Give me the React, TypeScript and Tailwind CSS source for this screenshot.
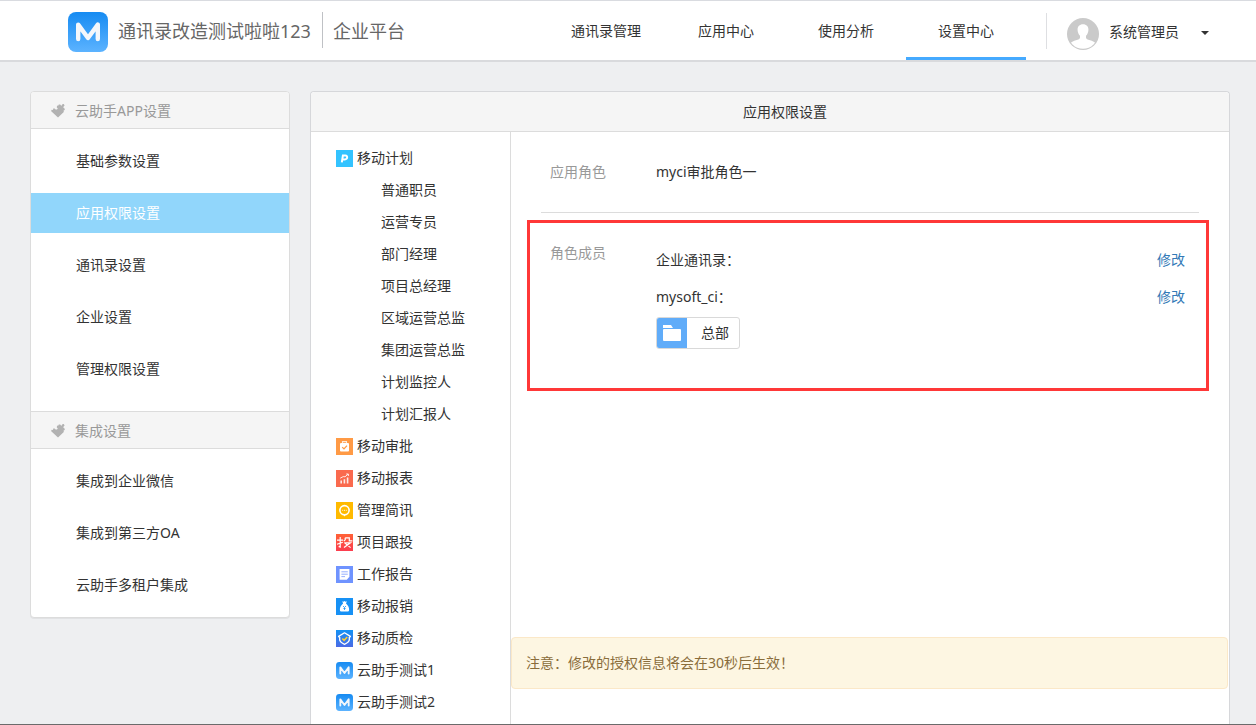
import React from "react";

const navItems = ["通讯录管理", "应用中心", "使用分析", "设置中心"];

const menuGroups = [
  {
    title: "云助手APP设置",
    items: ["基础参数设置", "应用权限设置", "通讯录设置", "企业设置", "管理权限设置"],
  },
  {
    title: "集成设置",
    items: ["集成到企业微信", "集成到第三方OA", "云助手多租户集成"],
  },
];

type AppNode = { name: string; icon: React.ReactNode; roles?: string[] };

function LogoIcon({ id, className }: { id: string; className: string }) {
  return (
    <svg viewBox="0 0 40 40" className={className} aria-hidden="true">
      <defs>
        <linearGradient id={id} x1="0" y1="0" x2="0" y2="1">
          <stop offset="0" stopColor="#168bf2" />
          <stop offset="1" stopColor="#5cb3ff" />
        </linearGradient>
      </defs>
      <rect width="40" height="40" rx="8" fill={`url(#${id})`} />
      <path
        d="M10.2 27V12.6L20 26L29.8 12.6V27"
        fill="none"
        stroke="#f4f7fb"
        strokeWidth="4.4"
        strokeLinecap="round"
        strokeLinejoin="round"
      />
    </svg>
  );
}

function Tile({ color, to, id, children }: { color: string; to?: string; id?: string; children: React.ReactNode }) {
  return (
    <svg viewBox="0 0 17 17" className="size-[17px] shrink-0" aria-hidden="true">
      {to && (
        <defs>
          <linearGradient id={id} x1="0" y1="0" x2="0" y2="1">
            <stop offset="0" stopColor={color} />
            <stop offset="1" stopColor={to} />
          </linearGradient>
        </defs>
      )}
      <rect width="17" height="17" fill={to ? `url(#${id})` : color} />
      {children}
    </svg>
  );
}

const apps: AppNode[] = [
  {
    name: "移动计划",
    icon: (
      <Tile color="#33c3ff">
        <path
          d="M5.8 12.4L6.9 5.6H9.4C12 5.6 11.6 9.4 8.9 9.4H6.6"
          fill="none"
          stroke="#fff"
          strokeWidth="2"
        />
      </Tile>
    ),
    roles: ["普通职员", "运营专员", "部门经理", "项目总经理", "区域运营总监", "集团运营总监", "计划监控人", "计划汇报人"],
  },
  {
    name: "移动审批",
    icon: (
      <Tile color="#ff9a45">
        <path d="M6.5 5.2V3.6H10.5V5.2" fill="none" stroke="#fff" strokeWidth="1.1" opacity=".8" />
        <rect x="4" y="5" width="9" height="8.6" rx="1" fill="#fff" />
        <path d="M6.2 9.1L8 10.9L11 7.6" fill="none" stroke="#ff9a45" strokeWidth="1.3" />
      </Tile>
    ),
  },
  {
    name: "移动报表",
    icon: (
      <Tile color="#fa6a4e">
        <path d="M5.2 10.5V13.4M8.4 9.2V13.4M11.6 7.5V13.4" stroke="#fff" strokeWidth="1.6" opacity=".85" />
        <path d="M4.2 8.2L7.2 6.6L9 6.8L12 4.2M10.2 4H12.4V6" fill="none" stroke="#fff" strokeWidth="1" opacity=".85" />
      </Tile>
    ),
  },
  {
    name: "管理简讯",
    icon: (
      <Tile color="#ffba00">
        <circle cx="8.5" cy="8.2" r="4.6" fill="none" stroke="#fff" strokeWidth="1.6" />
        <path d="M6.8 12.2L8.5 14.4L10.2 12.2Z" fill="#fff" />
        <path d="M6.2 8.3H10.8" stroke="#fff" strokeWidth="1.2" strokeDasharray="1 .8" opacity=".7" />
      </Tile>
    ),
  },
  {
    name: "项目跟投",
    icon: (
      <Tile color="#ff6136" to="#fb3d4f" id="invest">
        <path
          d="M1 6.2H7M4.2 3V13.2L2.6 12.5M1 10.2L6.8 8.2M9.2 3.8V5.8L7.8 7.2M9.2 3.9H13.3V6.8H16.4M8.2 8.8H14.4L8 13.4M9.2 9.4L14.6 13.6"
          fill="none"
          stroke="#fff"
          strokeWidth="1.2"
        />
      </Tile>
    ),
  },
  {
    name: "工作报告",
    icon: (
      <Tile color="#6f93ff">
        <path d="M3.6 3H13.4V10.8L10.8 13.8H3.6Z" fill="#fff" />
        <path d="M5.4 5.8H11.8M5.4 8.2H11.8M5.4 10.6H9" stroke="#8aa6ff" strokeWidth=".9" />
      </Tile>
    ),
  },
  {
    name: "移动报销",
    icon: (
      <Tile color="#1791f5">
        <path
          d="M6.2 3.2L7.4 3.8L8.5 3.1L9.6 3.8L10.9 3.2L10 5.6C12 7.6 13.4 9.6 13.1 12C13 13.2 12.4 13.5 11.4 13.5H5.6C4.6 13.5 4 13.2 3.9 12C3.6 9.6 5 7.6 7.1 5.6Z"
          fill="#fff"
        />
        <path d="M7 8L8.5 9.5L10 8M8.5 9.5V12M7.4 10.5H9.6" fill="none" stroke="#1791f5" strokeWidth=".8" />
      </Tile>
    ),
  },
  {
    name: "移动质检",
    icon: (
      <Tile color="#1492f4" to="#4b6be6" id="quality">
        <path
          d="M8.5 2.8L14.4 6.4L13.3 7.4V10.2C12.8 12.2 10.6 13.5 8.5 14.3C6.4 13.5 4.2 12.2 3.7 10.2V7.4L2.6 6.4Z"
          fill="none"
          stroke="#fff"
          strokeWidth="1.3"
          strokeLinejoin="round"
        />
        <path d="M6.3 8.4L8.1 10.3L11.2 7" fill="none" stroke="#ffd02e" strokeWidth="1.5" />
      </Tile>
    ),
  },
  { name: "云助手测试1", icon: <LogoIcon id="test1" className="size-[17px] shrink-0" /> },
  { name: "云助手测试2", icon: <LogoIcon id="test2" className="size-[17px] shrink-0" /> },
];

function GroupIcon() {
  return (
    <svg viewBox="0 0 14 14" className="size-[14px] shrink-0" aria-hidden="true">
      <path
        d="M0 7L.8 5.8L2 6L2.2 4.6L3.6 4.4L4.6 5.6H6L6.8 4.4L5.8 3.4L6 1.8L7.4 1.6L7.8.4H9.2L10 1.6L11 1.4L11.2.2L12.8 0L13.6 1.4L12.6 2.6L12.4 3.8L13.6 4.4L13.8 6L12.6 6.6L12.8 8L7 13.6L1.6 8.6Z"
        fill="#b2b2b2"
      />
    </svg>
  );
}

function Avatar() {
  return (
    <svg viewBox="0 0 32 32" className="size-8 shrink-0" aria-hidden="true">
      <defs>
        <clipPath id="avatar">
          <circle cx="16" cy="16" r="14.8" />
        </clipPath>
      </defs>
      <circle cx="16" cy="16" r="16" fill="#cacaca" />
      <path
        clipPath="url(#avatar)"
        d="M16 6.2C19.7 6.2 21.7 8.8 21.4 12.2C21.3 14.4 20.4 16.4 19 17.7V19.8C19.2 21.3 21.5 21.7 24 22.6C26.6 23.5 28 24.5 29 26V32H3V26C4 24.5 5.4 23.5 8 22.6C10.5 21.7 12.8 21.3 13 19.8V17.7C11.6 16.4 10.7 14.4 10.6 12.2C10.3 8.8 12.3 6.2 16 6.2Z"
        fill="#fff"
      />
    </svg>
  );
}

function Header() {
  return (
    <header className="flex h-[61px] shrink-0 items-start border-b-2 border-[#d9dadd] bg-white pr-[47px] pl-[68px]">
      <div className="flex items-start pt-[11px]">
        <LogoIcon id="brand" className="size-10" />
        <span className="ml-[10px] text-[18px] leading-[38px] whitespace-nowrap text-[#666]">通讯录改造测试啦啦123</span>
        <span className="ml-[11px] h-9 border-l border-[#bfc1c5] pl-[10px] text-[18px] leading-[38px] whitespace-nowrap text-[#666]">
          企业平台
        </span>
      </div>
      <nav className="ml-auto flex">
        {navItems.map((item) => (
          <a
            key={item}
            href="#"
            className={`h-[59px] w-[120px] border-b-[3px] text-center leading-[60px] ${
              item === "设置中心" ? "border-[#45aaff]" : "border-transparent"
            }`}
          >
            {item}
          </a>
        ))}
      </nav>
      <div className="mt-3 ml-5 h-9 border-l border-[#dedfe2]" />
      <button type="button" className="ml-5 flex items-start pt-[17px]">
        <Avatar />
        <span className="ml-[10px] leading-7 whitespace-nowrap">系统管理员</span>
        <svg viewBox="0 0 8 4" className="mt-[13px] ml-[22px] h-1 w-2" aria-hidden="true">
          <path d="M0 0H8L4 4Z" fill="#333" />
        </svg>
      </button>
    </header>
  );
}

function Sidebar() {
  return (
    <aside className="w-[260px] shrink-0 self-start overflow-hidden rounded border border-[#dcdcdc] bg-white shadow-2xs">
      {menuGroups.map((group, index) => (
        <section key={group.title} className={index > 0 ? "mt-[10px] border-t border-[#dcdcdc]" : ""}>
          <h2 className="flex h-[37px] items-center gap-[10px] border-b border-[#dcdcdc] bg-[#f5f5f5] pt-px pl-5 text-[#999]">
            <GroupIcon />
            {group.title}
          </h2>
          <ul className="flex flex-col gap-3 py-3">
            {group.items.map((item) => (
              <li key={item}>
                <a
                  href="#"
                  className={`block pl-[45px] leading-10 ${item === "应用权限设置" ? "bg-[#91d6fb] text-white" : ""}`}
                >
                  {item}
                </a>
              </li>
            ))}
          </ul>
        </section>
      ))}
    </aside>
  );
}

function AppTree() {
  return (
    <ul className="w-[200px] shrink-0 border-r border-[#dcdcdc] pt-[10px] pl-[25px] leading-8">
      {apps.map((app) => (
        <li key={app.name}>
          <a href="#" className="flex items-center gap-1">
            {app.icon}
            {app.name}
          </a>
          {app.roles && (
            <ul className="pl-[45px]">
              {app.roles.map((role) => (
                <li key={role}>
                  <a href="#" className="block">
                    {role}
                  </a>
                </li>
              ))}
            </ul>
          )}
        </li>
      ))}
    </ul>
  );
}

function RoleDetail() {
  return (
    <div className="flex min-w-0 flex-1 flex-col">
      <div className="mx-[30px] flex h-[81px] items-center border-b border-[#dcdcdc] pl-[9px]">
        <span className="w-[106px] shrink-0 text-[#999]">应用角色</span>
        <span>myci审批角色一</span>
      </div>
      <div className="mt-[7px] mr-5 ml-4 flex border-[3px] border-[#ff3838] pr-[21px] pb-[39px] pl-5">
        <span className="w-[106px] shrink-0 pt-5 text-[#999]">角色成员</span>
        <div className="flex-1 pt-[27px]">
          <div className="flex justify-between">
            <span>企业通讯录：</span>
            <a href="#" className="text-[#337ab7]">
              修改
            </a>
          </div>
          <div className="mt-[17px] flex justify-between">
            <span>mysoft_ci：</span>
            <a href="#" className="text-[#337ab7]">
              修改
            </a>
          </div>
          <div className="mt-[10px] inline-flex h-8 items-center overflow-hidden rounded-[3px] border border-[#d9d9d9] align-top">
            <span className="flex h-full w-[30px] items-center justify-center bg-[#60acf9]">
              <svg viewBox="0 0 18 16" className="h-4 w-[18px]" aria-hidden="true">
                <path d="M0 0H8L10 3H0Z" fill="#fff" />
                <rect y="4" width="18" height="12" rx="1" fill="#fff" />
              </svg>
            </span>
            <span className="pr-[10px] pl-[14px]">总部</span>
          </div>
        </div>
      </div>
      <p
        role="note"
        className="mt-auto mr-px mb-[35px] rounded border border-[#fbe8c8] bg-[#fdf6e2] px-[14px] py-[15px] text-[#8a6d3b]"
      >
        注意：修改的授权信息将会在30秒后生效！
      </p>
    </div>
  );
}

export default function App() {
  return (
    <div className="flex min-h-screen flex-col border-t border-b border-t-[#d9dbe0] border-b-[#6b6b6b] bg-[#eeeff1] font-['Noto_Sans','Noto_Sans_CJK_SC',sans-serif] text-[14px] leading-5 text-[#333]">
      <Header />
      <main className="flex flex-1 gap-5 pt-[29px] pr-[26px] pl-[30px]">
        <Sidebar />
        <section className="flex min-w-0 flex-1 flex-col rounded-t border border-b-0 border-[#d6d7da] bg-white">
          <h1 className="rounded-t border-b border-[#dcdcdc] bg-[#f5f5f5] pl-[30px] text-center leading-[39px]">
            应用权限设置
          </h1>
          <div className="flex flex-1">
            <AppTree />
            <RoleDetail />
          </div>
        </section>
      </main>
    </div>
  );
}
